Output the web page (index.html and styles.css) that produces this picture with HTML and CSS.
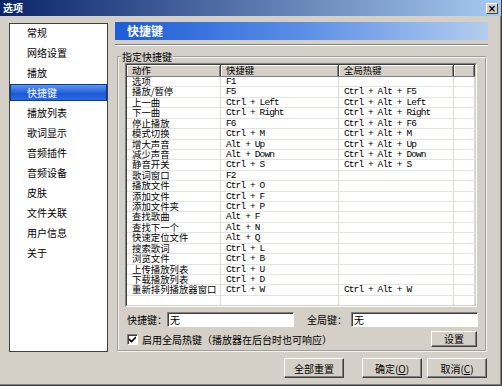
FILE: index.html
```html
<!DOCTYPE html>
<html lang="zh-CN">
<head>
    <meta charset="UTF-8">
    <title>选项</title>
    <link rel="stylesheet" href="styles.css">
</head>
<body>
<div class="window">
    <div class="titlebar">
        <span>选项</span>
        <span class="close">×</span>
    </div>

    <div class="content">
        <!-- menu on the left -->
        <ul class="sidebar">
            <li>常规</li>
            <li>网络设置</li>
            <li>播放</li>
            <li class="active">快捷键</li>
            <li>播放列表</li>
            <li>歌词显示</li>
            <li>音频插件</li>
            <li>音频设备</li>
            <li>皮肤</li>
            <li>文件关联</li>
            <li>用户信息</li>
            <li>关于</li>
        </ul>

        <div class="main">
            <div class="page-title">快捷键</div>
            <div class="sep"></div>

            <fieldset class="group">
                <legend>指定快捷键</legend>

                <div class="listview">
                    <div class="lv-inner">
                        <div class="lv-row lv-head">
                            <div>动作</div><div>快捷键</div><div>全局热键</div><div></div>
                        </div>
                        <div class="lv-row"><div>选项</div><div class="key">F1</div><div class="key"></div><div></div></div>
                        <div class="lv-row"><div>播放/暂停</div><div class="key">F5</div><div class="key">Ctrl + Alt + F5</div><div></div></div>
                        <div class="lv-row"><div>上一曲</div><div class="key">Ctrl + Left</div><div class="key">Ctrl + Alt + Left</div><div></div></div>
                        <div class="lv-row"><div>下一曲</div><div class="key">Ctrl + Right</div><div class="key">Ctrl + Alt + Right</div><div></div></div>
                        <div class="lv-row"><div>停止播放</div><div class="key">F6</div><div class="key">Ctrl + Alt + F6</div><div></div></div>
                        <div class="lv-row"><div>模式切换</div><div class="key">Ctrl + M</div><div class="key">Ctrl + Alt + M</div><div></div></div>
                        <div class="lv-row"><div>增大声音</div><div class="key">Alt + Up</div><div class="key">Ctrl + Alt + Up</div><div></div></div>
                        <div class="lv-row"><div>减少声音</div><div class="key">Alt + Down</div><div class="key">Ctrl + Alt + Down</div><div></div></div>
                        <div class="lv-row"><div>静音开关</div><div class="key">Ctrl + S</div><div class="key">Ctrl + Alt + S</div><div></div></div>
                        <div class="lv-row"><div>歌词窗口</div><div class="key">F2</div><div class="key"></div><div></div></div>
                        <div class="lv-row"><div>播放文件</div><div class="key">Ctrl + O</div><div class="key"></div><div></div></div>
                        <div class="lv-row"><div>添加文件</div><div class="key">Ctrl + F</div><div class="key"></div><div></div></div>
                        <div class="lv-row"><div>添加文件夹</div><div class="key">Ctrl + P</div><div class="key"></div><div></div></div>
                        <div class="lv-row"><div>查找歌曲</div><div class="key">Alt + F</div><div class="key"></div><div></div></div>
                        <div class="lv-row"><div>查找下一个</div><div class="key">Alt + N</div><div class="key"></div><div></div></div>
                        <div class="lv-row"><div>快速定位文件</div><div class="key">Alt + Q</div><div class="key"></div><div></div></div>
                        <div class="lv-row"><div>搜索歌词</div><div class="key">Ctrl + L</div><div class="key"></div><div></div></div>
                        <div class="lv-row"><div>浏览文件</div><div class="key">Ctrl + B</div><div class="key"></div><div></div></div>
                        <div class="lv-row"><div>上传播放列表</div><div class="key">Ctrl + U</div><div class="key"></div><div></div></div>
                        <div class="lv-row"><div>下载播放列表</div><div class="key">Ctrl + D</div><div class="key"></div><div></div></div>
                        <div class="lv-row"><div>重新排列播放器窗口</div><div class="key">Ctrl + W</div><div class="key">Ctrl + Alt + W</div><div></div></div>
                        <div class="lv-row"><div></div><div></div><div></div><div></div></div>
                    </div>
                </div>

                <div class="field-row">
                    <label class="lbl-first">快捷键：</label>
                    <div class="textbox">无</div>
                    <label class="lbl-second">全局键：</label>
                    <div class="textbox last">无</div>
                </div>

                <div class="check-row">
                    <span class="checkbox">
                        <svg width="7" height="7" viewBox="0 0 7 7"><path d="M0 3 L2.5 5.5 L7 1" fill="none" stroke="#000" stroke-width="1.6"/></svg>
                    </span>
                    <span class="check-text">启用全局热键（播放器在后台时也可响应）</span>
                    <button class="btn btn-small">设置</button>
                </div>
            </fieldset>

            <div class="footer">
                <button class="btn btn-reset">全部重置</button>
                <button class="btn btn-ok">确定(<u>O</u>)</button>
                <button class="btn">取消(<u>C</u>)</button>
            </div>
        </div>
    </div>
</div>
</body>
</html>
```

FILE: styles.css
```css
* {
    box-sizing: border-box;
}
body {
    margin: 0;
    background: #d4d0c8;
    font-family: "Noto Sans CJK SC", sans-serif;
    font-size: 10px;
    color: #000;
}
.window {
    width: 502px;
    height: 386px;
    background: #d4d0c8;
    border-right: 1px solid #404040;
    border-bottom: 1px solid #404040;
    box-shadow: inset -1px -1px 0 #808080;
    overflow: hidden;
}
.titlebar {
    height: 16px;
    padding: 0 3px 0 3px;
    background: linear-gradient(to right, #0a246a, #a6caf0);
    color: #fff;
    font-weight: bold;
    font-size: 10px;
    line-height: 16px;
    display: flex;
    align-items: center;
    justify-content: space-between;
}
.close {
    width: 12px;
    height: 11px;
    margin-top: 1px;
    background: #d4d0c8;
    border: 1px solid;
    border-color: #fff #404040 #404040 #fff;
    color: #000;
    font: bold 10px/9px "DejaVu Sans", sans-serif;
    text-align: center;
}
.content {
    display: flex;
    gap: 7px;
    padding: 6px 0 0 9px;
}
.sidebar {
    list-style: none;
    margin: 1px 0 0 0;
    padding: 0;
    width: 99px;
    height: 329px;
    background: #fff;
    border: 1px solid #404040;
}
.sidebar li {
    height: 17px;
    margin-bottom: 3px;
    padding-left: 17px;
    line-height: 17px;
}
.sidebar li.active {
    background: linear-gradient(#5b95ee, #1a5ad6 60%, #2d6be0);
    border: 1px solid #0c3a9c;
    padding-left: 16px;
    line-height: 15px;
    color: #fff;
}
.main {
    width: 373px;
}
.page-title {
    height: 18px;
    padding-left: 12px;
    background: linear-gradient(to right, #1d5cd8, #5a8ee6 50%, #b4cdee);
    color: #fff;
    font-weight: bold;
    font-size: 12px;
    line-height: 18px;
}
.sep {
    margin-top: 4px;
    border-top: 1px solid #808080;
    border-bottom: 1px solid #fff;
}
.group {
    margin: 5px 1px 0 2px;
    padding: 0 8px 3px 6px;
    border: 2px groove #f4f2ee;
}
.group legend {
    margin-left: -4px;
    padding: 0 1px;
    line-height: 12px;
}
.listview {
    height: 244px;
    border: 1px solid;
    border-color: #808080 #fff #fff #808080;
}
.lv-inner {
    height: 100%;
    overflow: hidden;
    background: #fff;
    border: 1px solid;
    border-color: #404040 #d4d0c8 #d4d0c8 #404040;
}
.lv-row {
    display: grid;
    grid-template-columns: 94px 118px 115px 1fr;
    height: 10.43px;
    font-size: 9.4px;
    line-height: 9.4px;
    border-bottom: 1px solid #e4e2dc;
}
.lv-row div {
    padding-left: 5px;
    border-right: 1px solid #dcd9d2;
    white-space: nowrap;
}
.lv-row .key {
    font-family: "Liberation Mono", monospace;
    font-size: 9.5px;
    letter-spacing: -0.9px;
}
.lv-head {
    height: 12px;
    line-height: 11px;
    border-bottom: 1px solid #808080;
}
.lv-head div {
    background: #d4d0c8;
    border-right: 1px solid #404040;
    box-shadow: inset 1px 1px 0 #fff, inset -1px 0 0 #808080;
}
.field-row {
    display: flex;
    align-items: center;
    height: 15px;
    margin-top: 5px;
    margin-right: -1px;
}
.lbl-first {
    width: 42px;
    padding-left: 2px;
}
.lbl-second {
    flex: 1;
    text-align: right;
    padding-right: 4px;
}
.textbox {
    width: 127px;
    height: 15px;
    padding-left: 2px;
    background: #fff;
    border: 1px solid;
    border-color: #808080 #fff #fff #808080;
    box-shadow: inset 1px 1px 0 #404040;
    line-height: 13px;
}
.check-row {
    display: flex;
    align-items: center;
    height: 16px;
    margin-top: 4px;
}
.checkbox {
    width: 11px;
    height: 11px;
    margin-left: 2px;
    margin-right: 4px;
    background: #fff;
    border: 1px solid;
    border-color: #808080 #fff #fff #808080;
    box-shadow: inset 1px 1px 0 #404040;
    display: flex;
    align-items: center;
    justify-content: center;
}
.check-text {
    flex: 1;
}
.btn {
    width: 60px;
    height: 20px;
    padding: 0;
    background: #d4d0c8;
    border: 1px solid;
    border-color: #fff #404040 #404040 #fff;
    box-shadow: inset -1px -1px 0 #808080;
    font-family: "Noto Sans CJK SC", sans-serif;
    font-size: 10px;
    color: #000;
}
.btn-small {
    width: 46px;
    height: 16px;
    line-height: 12px;
}
.footer {
    display: flex;
    justify-content: flex-end;
    margin-top: 6px;
    margin-right: 1px;
}
.btn-reset {
    margin-right: 18px;
}
.btn-ok {
    margin-right: 5px;
}
```
